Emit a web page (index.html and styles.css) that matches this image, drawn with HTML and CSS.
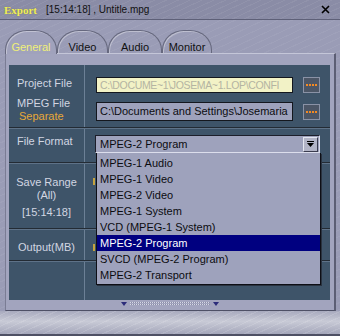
FILE: index.html
```html
<!DOCTYPE html>
<html lang="en">
  <head>
    <meta charset="UTF-8" />
    <title>Export</title>
    <link rel="stylesheet" href="styles.css">
  </head>
  <body>
    <div class="window">
      <div class="titlebar">
        <span class="app">Export</span>
        <span class="doc">[15:14:18] , Untitle.mpg</span>
        <svg class="close" width="9" height="9" viewBox="0 0 9 9">
          <path d="M1 1L8 8M8 1L1 8" stroke="#000" stroke-width="1.6" />
        </svg>
      </div>

      <div class="tabs">
        <div class="tab active tab-general">General</div>
        <div class="tab tab-video">Video</div>
        <div class="tab tab-audio">Audio</div>
        <div class="tab tab-monitor">Monitor</div>
      </div>

      <div class="frame">
        <div class="panel">
          <div class="row row-files">
            <div class="label">
              <div class="line">Project File</div>
              <div class="line mpeg">MPEG File</div>
              <div class="line separate">Separate</div>
            </div>
            <div class="field">
              <div class="file-line">
                <div class="input input-project">C:\DOCUME~1\JOSEMA~1.LOP\CONFI</div>
                <div class="browse"><span class="dots"></span></div>
              </div>
              <div class="file-line file-mpeg">
                <div class="input input-mpeg">C:\Documents and Settings\Josemaria</div>
                <div class="browse"><span class="dots"></span></div>
              </div>
            </div>
          </div>

          <div class="row row-format">
            <div class="label">File Format</div>
            <div class="field">
              <div class="select">
                <span class="select-text">MPEG-2 Program</span>
                <span class="select-btn">
                  <svg width="9" height="7" viewBox="0 0 9 7">
                    <rect x="1" y="0" width="7" height="1" fill="#000" />
                    <path d="M1 2H8L4.5 6Z" fill="#000" />
                  </svg>
                </span>
                <ul class="options">
                  <li>MPEG-1 Audio</li>
                  <li>MPEG-1 Video</li>
                  <li>MPEG-2 Video</li>
                  <li>MPEG-1 System</li>
                  <li>VCD (MPEG-1 System)</li>
                  <li class="selected">MPEG-2 Program</li>
                  <li>SVCD (MPEG-2 Program)</li>
                  <li>MPEG-2 Transport</li>
                </ul>
              </div>
            </div>
          </div>

          <div class="row row-range">
            <div class="label">
              <div class="line">Save Range</div>
              <div class="line">(All)</div>
              <div class="line time">[15:14:18]</div>
            </div>
            <div class="field"><span class="hidden-mark mark-range"></span></div>
          </div>

          <div class="row row-output">
            <div class="label">Output(MB)</div>
            <div class="field"><span class="hidden-mark mark-output"></span></div>
          </div>

          <div class="row row-empty">
            <div class="label"></div>
            <div class="field"></div>
          </div>
        </div>

        <div class="scroll">
          <span class="arrow"></span>
          <span class="grip"></span>
          <span class="arrow"></span>
        </div>
      </div>

      <div class="footer"></div>
    </div>
  </body>
</html>
```

FILE: styles.css
```css
* {
  margin: 0;
  padding: 0;
  box-sizing: border-box;
  font-family: "Liberation Sans", Arial, sans-serif;
}

body {
  background-color: #9a9cb6;
}

.window {
  width: 340px;
  height: 336px;
  display: flex;
  flex-direction: column;
  background-color: #9a9cb6;
  background-image: repeating-linear-gradient(
    -25deg,
    rgba(255, 255, 255, 0.05) 0 1px,
    transparent 1px 6px
  );
  overflow: hidden;
}

/* title bar */
.titlebar {
  height: 20px;
  display: flex;
  align-items: center;
  padding: 0 10px 0 4px;
  background-color: #8a8ca6;
  background-image: repeating-linear-gradient(
    -25deg,
    rgba(255, 255, 255, 0.06) 0 1px,
    transparent 1px 5px
  );
  border-bottom: 1px solid #5e6078;
}

.app {
  font-family: "Liberation Serif", "Times New Roman", serif;
  font-weight: bold;
  font-size: 11px;
  color: #f0ee60;
  text-shadow: 0 0 1px #707040;
  width: 42px;
}

.doc {
  font-size: 10px;
  color: #111;
  flex: 1;
}

.close {
  display: block;
}

/* tabs */
.tabs {
  display: flex;
  align-items: flex-end;
  height: 23px;
  margin-top: 10px;
  padding-left: 5px;
}

.tab {
  height: 23px;
  padding-top: 9px;
  line-height: 14px;
  font-size: 11px;
  text-align: center;
  color: #111;
  border: 1px solid #66687e;
  border-bottom: none;
  border-radius: 22px 22px 0 0 / 20px 20px 0 0;
  box-shadow: inset 1px 1px 0 rgba(255, 255, 255, 0.35);
}

.tab.active {
  color: #f0f078;
  height: 24px;
  margin-bottom: -1px;
  background-color: #a0a2bc;
  position: relative;
  z-index: 1;
}

.tab-general {
  width: 52px;
}

.tab-video {
  width: 51px;
}

.tab-audio {
  width: 54px;
}

.tab-monitor {
  width: 50px;
}

/* main frame */
.frame {
  height: 258px;
  margin: 0 4px 0 5px;
  padding: 11px 4px 0 3px;
  background-color: #a2a4be;
  border-top: 1px solid #c4c6d8;
  border-left: 1px solid #7a7c94;
  border-right: 2px solid #5c5e74;
  border-bottom: 1px solid #4e5066;
}

.panel {
  height: 235px;
  background-color: #3e5469;
}

.row {
  display: grid;
  grid-template-columns: 76px 1fr;
  border-bottom: 2px groove #5e7288;
}

.row-files {
  height: 64px;
}

.row-format {
  height: 35px;
}

.row-range {
  height: 66px;
}

.row-output {
  height: 32px;
}

.row-empty {
  height: 38px;
  border-bottom: none;
}

.label {
  border-right: 1px solid #6c8096;
  color: #d2d6e2;
  font-size: 11px;
  line-height: 14px;
  padding-left: 8px;
}

.field {
  position: relative;
}

/* files row */
.row-files .label {
  padding-top: 12px;
}

.row-files .label .line {
  line-height: 13px;
}

.row-files .label .mpeg {
  margin-top: 7px;
}

.separate {
  color: #e6a838;
  padding-left: 2px;
}

.row-files .field {
  padding: 12px 0 0 11px;
}

.file-line {
  display: flex;
  align-items: center;
  gap: 10px;
}

.file-mpeg {
  margin-top: 9px;
}

.input {
  width: 197px;
  border: 1px solid #14171e;
  font-size: 11px;
  padding-left: 3px;
  white-space: nowrap;
}

.input-project {
  height: 16px;
  line-height: 14px;
  font-size: 10.5px;
  letter-spacing: -0.35px;
  background-color: #f2f2c6;
  color: #b4b4a2;
}

.input-mpeg {
  height: 19px;
  line-height: 17px;
  background-color: #9ea2bc;
  color: #0c0c10;
}

.browse {
  width: 17px;
  height: 16px;
  background-color: #4c5666;
  border: 1px solid #8a92a6;
  display: flex;
  align-items: center;
  justify-content: center;
}

.dots {
  width: 11px;
  height: 2px;
  background-image: repeating-linear-gradient(
    90deg,
    #f48a22 0 2px,
    transparent 2px 3px
  );
}

/* file format row */
.row-format .label {
  padding-top: 5px;
}

.row-format .field {
  padding: 6px 0 0 10px;
}

.select {
  position: relative;
  width: 225px;
  height: 18px;
  display: flex;
  align-items: center;
  justify-content: space-between;
  background-color: #9ea2bc;
  border: 1px solid;
  border-color: #1c1e2a #dcdeec #dcdeec #1c1e2a;
  padding: 0 1px 0 4px;
  font-size: 11px;
  color: #0c0c10;
}

.select-btn {
  width: 15px;
  height: 15px;
  display: flex;
  align-items: center;
  justify-content: center;
  background-color: #b2b4c6;
  border: 1px solid;
  border-color: #e4e6f0 #3a3c4e #3a3c4e #e4e6f0;
}

.options {
  list-style: none;
  position: absolute;
  top: 17px;
  left: 0;
  width: 225px;
  padding: 2px 0 1px;
  background-color: #9ea2bc;
  border: 1px solid #0e0f16;
  border-top: none;
  box-shadow: 1px 1px 0 #2a3340;
  z-index: 2;
}

.options li {
  height: 16px;
  line-height: 16px;
  padding-left: 3px;
  font-size: 11px;
  color: #0c0c10;
}

.options li.selected {
  background-color: #000080;
  color: #fff;
}

/* save range / output rows */
.row-range .label {
  padding: 12px 0 0 0;
  text-align: center;
  line-height: 13px;
}

.row-range .label .time {
  margin-top: 4px;
}

.row-output .label {
  padding: 10px 0 0 0;
  text-align: center;
}

.hidden-mark {
  display: block;
  width: 2px;
  height: 7px;
  margin-left: 8px;
  background-color: #c4a440;
}

.mark-range {
  margin-top: 14px;
}

.mark-output {
  margin-top: 14px;
}

/* scroll strip */
.scroll {
  height: 10px;
  display: flex;
  align-items: center;
  justify-content: center;
  gap: 3px;
  padding-bottom: 3px;
}

.arrow {
  width: 0;
  height: 0;
  border-left: 3px solid transparent;
  border-right: 3px solid transparent;
  border-top: 4px solid #2c2c7a;
}

.grip {
  width: 80px;
  height: 4px;
  background-image: repeating-linear-gradient(
      0deg,
      #a2a4be 0 1px,
      transparent 1px 2px
    ),
    repeating-linear-gradient(90deg, #d6d8e6 0 1px, #8a8ca6 1px 2px);
}

.footer {
  flex: 1;
  background-image: repeating-linear-gradient(
      -25deg,
      rgba(255, 255, 255, 0.12) 0 1px,
      transparent 1px 5px
    ),
    linear-gradient(#a8aabe, #c8cad6 45%, #a4a6ba);
  border-bottom: 2px solid #4e5064;
}
```
